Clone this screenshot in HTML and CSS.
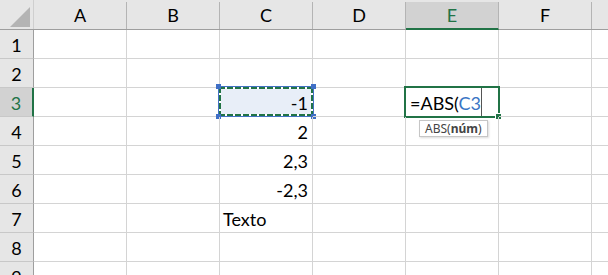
FILE: index.html
```html
<!DOCTYPE html>
<html lang="pt">
<head>
    <meta charset="UTF-8">
    <meta name="viewport" content="width=device-width, initial-scale=1.0">
    <title>ABS - Planilha</title>
    <link rel="stylesheet" href="styles.css">
</head>
<body>
    <div class="sheet">
        <!-- Column headers -->
        <div class="row head-row">
            <div class="corner"><span class="tri"></span></div>
            <div class="col-head">A</div>
            <div class="col-head">B</div>
            <div class="col-head">C</div>
            <div class="col-head">D</div>
            <div class="col-head active">E</div>
            <div class="col-head">F</div>
            <div class="col-head"></div>
        </div>

        <div class="row">
            <div class="row-head">1</div>
            <div class="cell"></div><div class="cell"></div><div class="cell"></div><div class="cell"></div>
            <div class="cell"></div><div class="cell"></div><div class="cell"></div>
        </div>
        <div class="row">
            <div class="row-head">2</div>
            <div class="cell"></div><div class="cell"></div><div class="cell"></div><div class="cell"></div>
            <div class="cell"></div><div class="cell"></div><div class="cell"></div>
        </div>
        <div class="row">
            <div class="row-head active">3</div>
            <div class="cell"></div><div class="cell"></div>
            <div class="cell num ref">
                <span class="ref-box">
                    <i class="handle tl"></i><i class="handle tr"></i>
                    <i class="handle bl"></i><i class="handle br"></i>
                </span>
                <span class="val">-1</span>
            </div>
            <div class="cell"></div>
            <div class="cell editing">
                <span class="edit-box"><i class="fill-handle"></i></span>
                <span class="val">=ABS(<span class="ref-text">C3</span></span><span class="caret"></span>
                <div class="tip">ABS(<b>núm</b>)</div>
            </div>
            <div class="cell"></div><div class="cell"></div>
        </div>
        <div class="row">
            <div class="row-head">4</div>
            <div class="cell"></div><div class="cell"></div>
            <div class="cell num"><span class="val">2</span></div>
            <div class="cell"></div><div class="cell"></div><div class="cell"></div><div class="cell"></div>
        </div>
        <div class="row">
            <div class="row-head">5</div>
            <div class="cell"></div><div class="cell"></div>
            <div class="cell num"><span class="val">2,3</span></div>
            <div class="cell"></div><div class="cell"></div><div class="cell"></div><div class="cell"></div>
        </div>
        <div class="row">
            <div class="row-head">6</div>
            <div class="cell"></div><div class="cell"></div>
            <div class="cell num"><span class="val">-2,3</span></div>
            <div class="cell"></div><div class="cell"></div><div class="cell"></div><div class="cell"></div>
        </div>
        <div class="row">
            <div class="row-head">7</div>
            <div class="cell"></div><div class="cell"></div>
            <div class="cell"><span class="val">Texto</span></div>
            <div class="cell"></div><div class="cell"></div><div class="cell"></div><div class="cell"></div>
        </div>
        <div class="row">
            <div class="row-head">8</div>
            <div class="cell"></div><div class="cell"></div><div class="cell"></div><div class="cell"></div>
            <div class="cell"></div><div class="cell"></div><div class="cell"></div>
        </div>
        <div class="row">
            <div class="row-head">9</div>
            <div class="cell"></div><div class="cell"></div><div class="cell"></div><div class="cell"></div>
            <div class="cell"></div><div class="cell"></div><div class="cell"></div>
        </div>
    </div>
</body>
</html>
```

FILE: styles.css
```css
/* Excel-like sheet */
body {
    margin: 0;
    overflow: hidden;
    background-color: #ffffff;
    font-family: "Lato", "Liberation Sans", sans-serif;
    font-size: 18px;
    color: #000000;
}
.sheet {
    width: 608px;
    height: 275px;
    overflow: hidden;
}
.row {
    display: flex;
    height: 29px;
}
.row > div {
    flex: none;
    box-sizing: border-box;
}

/* Header row */
.head-row {
    height: 30px;
    padding-top: 2px;
    background-color: #e6e6e6;
    border-bottom: 1px solid #9e9e9e;
    box-sizing: border-box;
}
.corner {
    width: 34px;
    display: flex;
    align-items: flex-end;
    justify-content: flex-end;
    padding: 0 3px 2px 0;
    border-right: 1px solid #cfcfcf;
    margin-top: -2px;
}
.tri {
    width: 0;
    height: 0;
    border-left: 20px solid transparent;
    border-bottom: 20px solid #b4b4b4;
}
.col-head {
    width: 93px;
    display: flex;
    align-items: flex-end;
    justify-content: center;
    padding-bottom: 5px;
    line-height: 18px;
    border-right: 1px solid #b4b4b4;
}
.col-head.active {
    background-color: #d2d2d2;
    color: #217346;
    border-bottom: 2px solid #217346;
    margin-bottom: -1px;
    padding-bottom: 4px;
}

/* Row headers */
.row-head {
    width: 34px;
    display: flex;
    align-items: flex-end;
    justify-content: center;
    padding-bottom: 4px;
    line-height: 18px;
    background-color: #e6e6e6;
    border-right: 1px solid #9e9e9e;
    border-bottom: 1px solid #c8c8c8;
}
.row-head.active {
    background-color: #d2d2d2;
    color: #217346;
    border-right: 2px solid #217346;
}

/* Cells */
.cell {
    width: 93px;
    position: relative;
    display: flex;
    align-items: flex-end;
    padding: 0 4px 4px 3px;
    line-height: 18px;
    white-space: nowrap;
    border-right: 1px solid #d4d4d4;
    border-bottom: 1px solid #d4d4d4;
}
.cell.num {
    justify-content: flex-end;
}
.val {
    position: relative;
}

/* Formula reference (C3) */
.cell.ref {
    background-color: #e8eef8;
}
.ref-box {
    position: absolute;
    left: -2px;
    top: -2px;
    width: 96px;
    height: 31px;
    box-sizing: border-box;
    border: 1px solid #4472c4;
}
.ref-box::before {
    content: "";
    position: absolute;
    inset: 0;
    background:
        repeating-linear-gradient(90deg, #217346 0 6px, #ffffff 6px 8px) top / 100% 2px no-repeat,
        repeating-linear-gradient(90deg, #217346 0 6px, #ffffff 6px 8px) bottom / 100% 2px no-repeat,
        repeating-linear-gradient(180deg, #217346 0 6px, #ffffff 6px 8px) left / 2px 100% no-repeat,
        repeating-linear-gradient(180deg, #217346 0 6px, #ffffff 6px 8px) right / 2px 100% no-repeat;
}
.handle {
    position: absolute;
    width: 5px;
    height: 5px;
    background-color: #3f6fc6;
}
.handle.tl { left: -3px; top: -3px; }
.handle.tr { right: -3px; top: -3px; }
.handle.bl { left: -3px; bottom: -3px; }
.handle.br { right: -3px; bottom: -3px; }

/* Cell in edit mode (E3) */
.cell.editing {
    padding-left: 4px;
}
.edit-box {
    position: absolute;
    left: -2px;
    top: -2px;
    width: 96px;
    height: 32px;
    box-sizing: border-box;
    border: 2px solid #217346;
}
.fill-handle {
    position: absolute;
    right: -3px;
    bottom: -3px;
    width: 5px;
    height: 5px;
    background-color: #217346;
    border-left: 1px solid #ffffff;
    border-top: 1px solid #ffffff;
}
.ref-text {
    color: #3a75c4;
}
.caret {
    position: absolute;
    left: 75px;
    top: 0;
    width: 1px;
    height: 28px;
    background-color: #555555;
}
.tip {
    position: absolute;
    left: 13px;
    top: 32px;
    z-index: 2;
    height: 17px;
    padding: 0 5px;
    box-sizing: border-box;
    line-height: 15px;
    font-family: "Noto Sans", "Liberation Sans", sans-serif;
    font-size: 12px;
    color: #444444;
    background-color: #ffffff;
    border: 1px solid #c6c6c6;
    box-shadow: 1px 1px 2px rgba(0, 0, 0, 0.15);
}
```
